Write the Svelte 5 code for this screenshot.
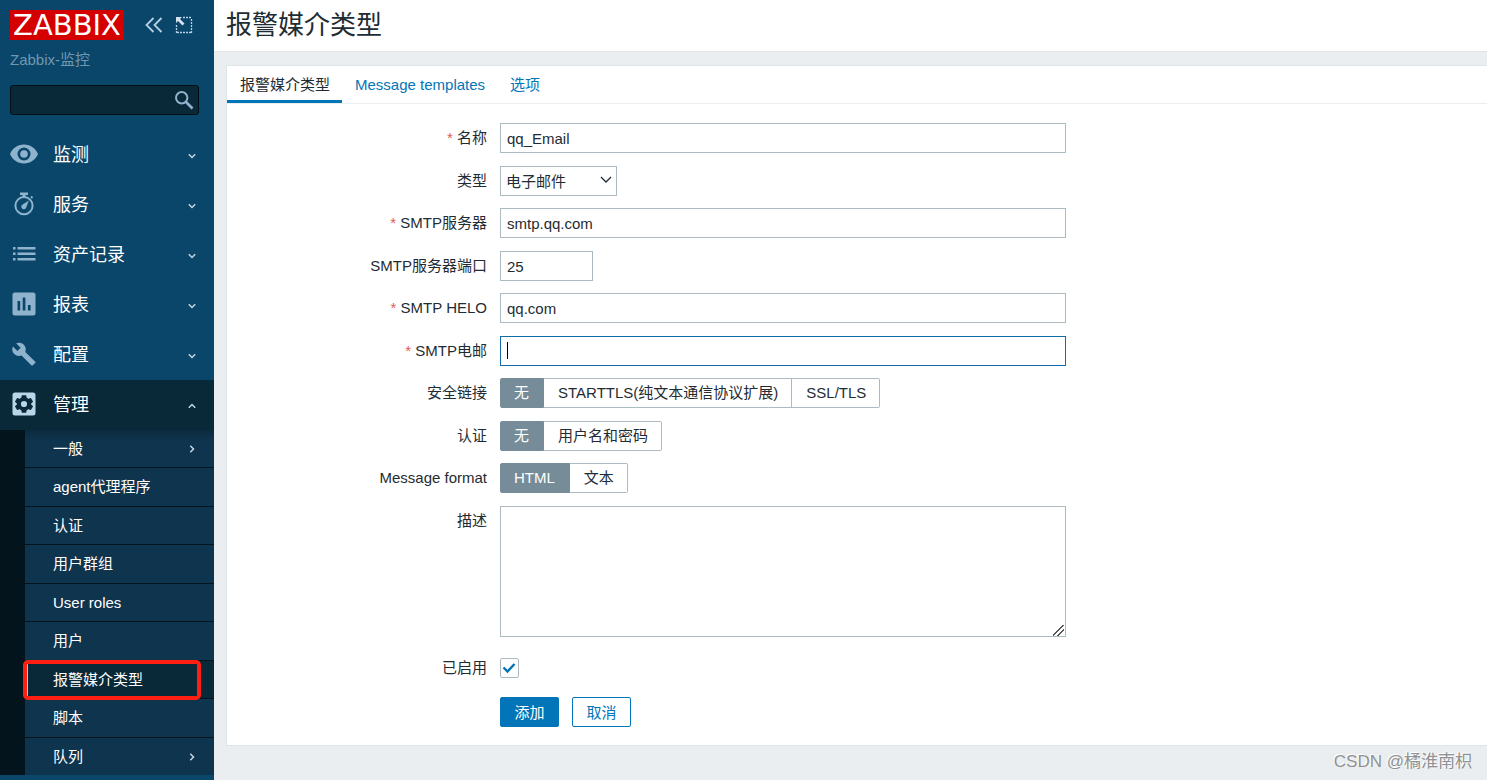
<script>
	const menu = [
		{ id: 'monitoring', label: '监测' },
		{ id: 'services', label: '服务' },
		{ id: 'inventory', label: '资产记录' },
		{ id: 'reports', label: '报表' },
		{ id: 'configuration', label: '配置' },
		{ id: 'administration', label: '管理' }
	];

	const submenu = [
		{ label: '一般', nested: true },
		{ label: 'agent代理程序' },
		{ label: '认证' },
		{ label: '用户群组' },
		{ label: 'User roles' },
		{ label: '用户' },
		{ label: '报警媒介类型' },
		{ label: '脚本' },
		{ label: '队列', nested: true }
	];

	const tabs = ['报警媒介类型', 'Message templates', '选项'];

	let activeMenu = $state('administration');
	let activePage = $state('报警媒介类型');
	let activeTab = $state(tabs[0]);

	let search = $state('');
	let form = $state({
		name: 'qq_Email',
		type: 'email',
		server: 'smtp.qq.com',
		port: '25',
		helo: 'qq.com',
		email: '',
		security: '无',
		auth: '无',
		format: 'HTML',
		description: '',
		enabled: true
	});
</script>

{#snippet chevron(dir)}
	<svg class="chevron {dir}" viewBox="0 0 8 8" width="8" height="8"><path d="M.8 2.3 4 5.5l3.2-3.2" /></svg>
{/snippet}

{#snippet textRow(key, label, required, size)}
	<div class="row">
		<label class="caption" class:required for={key}>{label}</label>
		<input id={key} class="text {size}" type="text" bind:value={form[key]} />
	</div>
{/snippet}

{#snippet radioRow(key, label, options)}
	<div class="row" role="radiogroup" aria-labelledby="{key}-label">
		<span class="caption" id="{key}-label">{label}</span>
		<div class="segments">
			{#each options as option, i}
				<div class="segment">
					<input type="radio" id="{key}-{i}" name={key} value={option} bind:group={form[key]} />
					<label for="{key}-{i}">{option}</label>
				</div>
			{/each}
		</div>
	</div>
{/snippet}

<div class="wrapper">
	<aside class="sidebar">
		<div class="brand">
			<a class="logo" href="#home">ZABBIX</a>
			<button class="tool" aria-label="Collapse sidebar">
				<svg viewBox="0 0 20 20" width="20" height="20" fill="none" stroke="#b5d0e4" stroke-width="1.8">
					<path d="M9.500 3 2.500 10l7 7M17.500 3l-7 7 7 7" />
				</svg>
			</button>
			<button class="tool" aria-label="Hide sidebar">
				<svg viewBox="0 0 20 20" width="20" height="20" fill="none" stroke="#b5d0e4">
					<path d="M9 2.500h9M17.500 4v14M2.500 10v8M3 17.500h14" stroke-width="1.300" stroke-dasharray="2 1" />
					<path d="M2 2h6L6 4l4.500 4.500-2 2L4 6 2 8z" fill="#d3e2ee" stroke="none" />
				</svg>
			</button>
		</div>
		<div class="server">Zabbix-监控</div>
		<form class="search">
			<input type="text" aria-label="Search" bind:value={search} />
			<button type="button" aria-label="Search">
				<svg viewBox="0 0 20 20" width="20" height="20" fill="none" stroke="#8fb3cc">
					<circle cx="7.700" cy="7.700" r="5.700" stroke-width="2" />
					<path d="m12 12 6.500 6.500" stroke-width="2.600" />
				</svg>
			</button>
		</form>

		<nav>
			{#each menu as item}
				<a
					class="menu-item"
					class:open={activeMenu === item.id}
					href="#{item.id}"
					onclick={() => (activeMenu = item.id)}
				>
					<svg class="icon" viewBox="0 0 28 28" width="28" height="28">
						{#if item.id === 'monitoring'}
							<path
								fill-rule="evenodd"
								d="M14 4.500C7.600 4.500 2.200 8.400 0 14c2.200 5.600 7.600 9.500 14 9.500S25.800 19.600 28 14C25.800 8.400 20.400 4.500 14 4.500zm0 16a6.500 6.500 0 1 1 0-13 6.500 6.500 0 0 1 0 13zm0-10.300a3.800 3.800 0 1 0 0 7.600 3.800 3.800 0 0 0 0-7.600z"
							/>
						{:else if item.id === 'services'}
							<circle cx="14" cy="15.700" r="8.600" fill="none" class="line" />
							<path d="M10 2.500h8v2.500h-2.400v2.500h-3.200V5H10zM20.300 7.200l1.400-1.400 1.500 1.500-1.400 1.400zM18.800 10.500l-2.300 6.300a2.600 2.600 0 1 1-3.400-2.600z" />
						{:else if item.id === 'inventory'}
							<path d="M3 7h2.500v2.500H3zM3 12.500h2.500V15H3zM3 18h2.500v2.500H3zM7.500 7H25.500v2.500H7.500zM7.500 12.500H25.500V15H7.500zM7.500 18H25.500v2.500H7.500z" />
						{:else if item.id === 'reports'}
							<path
								fill-rule="evenodd"
								d="M5 2.500h18q2.500 0 2.500 2.500v18q0 2.500-2.500 2.500H5Q2.500 25.500 2.500 23V5q0-2.500 2.500-2.500zM7.500 11v9.500h2.700V11zm5.200-3.500v13h2.700v-13zm5.200 7.500v5.500h2.700V15z"
							/>
						{:else if item.id === 'configuration'}
							<path d="m25 21.500-9.700-9.600c1-2.500.4-5.300-1.500-7.200-2.100-2.100-5.200-2.500-7.700-1.400l4.500 4.400-3.200 3.200L2.900 6.500C1.700 9 2.200 12.100 4.300 14.100c2 2 4.800 2.500 7.200 1.500l9.800 9.700c.4.400 1 .4 1.500 0l2.300-2.300c.5-.4.5-1.100-.1-1.500z" />
						{:else}
							<path
								fill-rule="evenodd"
								d="M5 2.500h18q2.500 0 2.500 2.500v18q0 2.500-2.500 2.500H5Q2.500 25.500 2.500 23V5q0-2.500 2.500-2.500zm6.800 2.700-.5 2.600-1.700 1-2.500-.9-2.200 3.800 2 1.700v1.200l-2 1.700 2.200 3.800 2.500-.9 1.700 1 .5 2.600h4.400l.5-2.600 1.700-1 2.500.9 2.200-3.800-2-1.700v-1.200l2-1.700-2.200-3.800-2.500.9-1.700-1-.5-2.600zM14 10.900a3.100 3.100 0 1 1 0 6.200 3.100 3.100 0 0 1 0-6.200z"
							/>
						{/if}
					</svg>
					<span>{item.label}</span>
					{@render chevron(activeMenu === item.id ? 'up' : 'down')}
				</a>
			{/each}
			<ul class="submenu">
				{#each submenu as page}
					<li>
						<a
							class:active={activePage === page.label}
							href="#{page.label}"
							onclick={() => (activePage = page.label)}
						>
							<span>{page.label}</span>
							{#if page.nested}{@render chevron('right')}{/if}
						</a>
					</li>
				{/each}
			</ul>
		</nav>
	</aside>

	<main>
		<header>
			<h1>报警媒介类型</h1>
		</header>

		<section class="panel">
			<div class="tabs">
				{#each tabs as tab}
					<a class:selected={activeTab === tab} href="#{tab}" onclick={() => (activeTab = tab)}>{tab}</a>
				{/each}
			</div>

			<form class="fields">
				{@render textRow('name', '名称', true, 'wide')}
				<div class="row">
					<label class="caption" for="type">类型</label>
					<div class="select">
						<select id="type" bind:value={form.type}>
							<option value="email">电子邮件</option>
							<option value="sms">短信</option>
							<option value="script">脚本</option>
						</select>
						<svg viewBox="0 0 12 8" width="12" height="8"><path d="m1 1 5 5 5-5" /></svg>
					</div>
				</div>
				{@render textRow('server', 'SMTP服务器', true, 'wide')}
				{@render textRow('port', 'SMTP服务器端口', false, 'short')}
				{@render textRow('helo', 'SMTP HELO', true, 'wide')}
				<div class="row">
					<label class="caption required" for="email">SMTP电邮</label>
					<div class="current">
						<input id="email" class="text" type="text" bind:value={form.email} />
						{#if !form.email}<i class="caret"></i>{/if}
					</div>
				</div>
				{@render radioRow('security', '安全链接', ['无', 'STARTTLS(纯文本通信协议扩展)', 'SSL/TLS'])}
				{@render radioRow('auth', '认证', ['无', '用户名和密码'])}
				{@render radioRow('format', 'Message format', ['HTML', '文本'])}
				<div class="row">
					<label class="caption" for="description">描述</label>
					<textarea id="description" bind:value={form.description}></textarea>
				</div>
				<div class="row enabled">
					<label class="caption" for="enabled">已启用</label>
					<div class="checkbox">
						<input id="enabled" type="checkbox" bind:checked={form.enabled} />
						{#if form.enabled}
							<svg viewBox="0 0 14 12" width="14" height="12"><path d="m1.500 5.500 4 4 7-7.500" /></svg>
						{/if}
					</div>
				</div>
				<div class="actions">
					<button type="button" class="primary">添加</button>
					<button type="button">取消</button>
				</div>
			</form>
		</section>
		<div class="watermark">CSDN @橘淮南枳</div>
	</main>
</div>

<style>
	:global(body) {
		background: #ebeef0;
	}

	.wrapper,
	.wrapper * {
		box-sizing: border-box;
	}

	.wrapper {
		display: flex;
		min-height: 100vh;
		color: #1f2c33;
		font-family: 'Liberation Sans', Arial, 'Noto Sans CJK SC', sans-serif;
		font-size: 15px;
		line-height: 20px;
	}

	a {
		text-decoration: none;
	}

	button,
	input,
	select,
	textarea {
		font: inherit;
		color: inherit;
		margin: 0;
	}

	button {
		cursor: pointer;
	}

	.sidebar {
		flex: none;
		width: 214px;
		background: #0a466a;
	}

	.brand {
		display: flex;
		align-items: center;
		gap: 10px;
		padding: 10px 10px 0;
	}

	.logo {
		width: 114px;
		height: 30px;
		margin-right: 10px;
		background: #d40000;
		color: #fff;
		font-family: 'DejaVu Sans', sans-serif;
		font-size: 29px;
		line-height: 30px;
		text-align: center;
	}

	.tool {
		display: flex;
		padding: 0;
		border: 0;
		background: none;
	}

	.server {
		padding: 10px 10px 0;
		color: #7297af;
	}

	.search {
		display: flex;
		height: 30px;
		margin: 15px 15px 15px 10px;
		border: 1px solid #020e14;
		border-radius: 3px;
		background: #092838;
	}

	.search input {
		flex: 1;
		min-width: 0;
		border: 0;
		outline: 0;
		background: none;
		color: #fff;
	}

	.search button {
		display: flex;
		align-items: center;
		padding: 0 4px;
		border: 0;
		background: none;
	}

	.menu-item {
		display: flex;
		align-items: center;
		height: 50px;
		padding: 0 18px 2px 10px;
		color: #fff;
		font-size: 18px;
	}

	.menu-item span {
		flex: 1;
		padding: 2px 0 0 15px;
	}

	.icon {
		fill: #8fb3cc;
	}

	.icon .line {
		stroke: #8fb3cc;
		stroke-width: 2;
	}

	.menu-item.open {
		background: #092838;
	}

	.open .icon {
		fill: #b9d5e9;
	}

	.chevron {
		flex: none;
		fill: none;
		stroke: #c3d6e3;
		stroke-width: 1.5;
	}

	.menu-item .chevron {
		margin-top: 4px;
	}

	.up {
		transform: rotate(180deg);
	}

	.right {
		transform: rotate(-90deg);
	}

	.submenu {
		margin: 0;
		padding: 0 0 0 25px;
		list-style: none;
		background:
			linear-gradient(rgba(3, 20, 29, 0.3), transparent 10px),
			linear-gradient(90deg, #03141d 25px, #0f344d 25px);
	}

	.submenu li {
		height: 38px;
		border-bottom: 1px solid #03141d;
	}

	.submenu li:nth-child(even) {
		height: 39px;
	}

	.submenu li:last-child {
		height: 37px;
		border: 0;
	}

	.submenu a {
		display: flex;
		align-items: center;
		justify-content: space-between;
		height: 100%;
		padding: 0 18px 0 28px;
		color: #fff;
	}

	/* red frame round the current page overlaps the neighbouring rows */
	.submenu a.active {
		position: relative;
		border-left: 3px solid #b9d5e9;
		padding-left: 25px;
		background: #092838;
	}

	.submenu a.active::after {
		content: '';
		position: absolute;
		inset: -1px 13px -2px -5px;
		border: 4px solid #fc1f12;
		border-radius: 5px;
	}

	main {
		position: relative;
		flex: 1;
		min-width: 0;
	}

	header {
		padding: 1px 12px 0;
		border-bottom: 1px solid #dfe4e7;
		background: #fff;
	}

	h1 {
		margin: 0;
		padding-bottom: 2px;
		font-size: 26px;
		font-weight: normal;
		line-height: 48px;
	}

	.panel {
		margin: 13px 0 0 12px;
		border: 1px solid #dfe4e7;
		border-right: 0;
		background: #fff;
	}

	.tabs {
		display: flex;
		height: 38px;
		border-bottom: 1px solid #ebeef0;
	}

	.tabs a {
		height: 37px;
		padding: 0 12px 0 13px;
		color: #0275b8;
		line-height: 37px;
	}

	.tabs a.selected {
		border-bottom: 3px solid #0275b8;
		color: #1f2c33;
	}

	.fields {
		padding: 19px 0 18px;
	}

	.row {
		display: flex;
		margin-bottom: 12px;
	}

	.row:nth-child(odd) {
		margin-bottom: 13px;
	}

	.caption {
		flex: none;
		width: 273px;
		padding-right: 13px;
		line-height: 30px;
		text-align: right;
	}

	.required::before {
		content: '* ';
		color: #e45959;
	}

	.text,
	select,
	textarea {
		border: 1px solid #acbbc2;
		border-radius: 0;
		outline: 0;
		background: #fff;
	}

	.text {
		width: 100%;
		height: 30px;
		padding: 1px 6px 0;
	}

	.wide,
	.current,
	textarea {
		width: 566px;
	}

	.short {
		width: 93px;
	}

	.current {
		position: relative;
	}

	.current .text {
		border-color: #0f6ca8;
	}

	.caret {
		position: absolute;
		top: 6px;
		left: 7px;
		width: 1px;
		height: 17px;
		background: #000;
	}

	.select {
		position: relative;
	}

	select {
		width: 117px;
		height: 30px;
		padding: 1px 5px 0;
		appearance: none;
	}

	.select svg {
		position: absolute;
		top: 10px;
		right: 5px;
		fill: none;
		stroke: #1f2c33;
		stroke-width: 1.3;
		pointer-events: none;
	}

	.segments {
		display: flex;
	}

	.segment {
		position: relative;
	}

	.segment input {
		position: absolute;
		inset: 0;
		opacity: 0;
	}

	.segment label {
		display: block;
		height: 30px;
		padding: 0 13px 0 14px;
		border: 1px solid #acbbc2;
		border-left-width: 0;
		line-height: 28px;
	}

	.segment:first-child label {
		padding: 0 14px 0 13px;
		border-left-width: 1px;
		border-radius: 2px 0 0 2px;
	}

	.segment:last-child label {
		border-radius: 0 2px 2px 0;
	}

	.segment input:checked + label {
		border-color: #768d99;
		background: #768d99;
		color: #fff;
	}

	textarea {
		display: block;
		height: 131px;
		padding: 4px 6px;
		resize: both;
	}

	textarea::-webkit-resizer {
		background: linear-gradient(
				135deg,
				transparent 42%,
				#555 42% 51%,
				transparent 51% 65%,
				#555 65% 74%,
				transparent 74%
			)
			3px 4px / 11px 11px no-repeat;
	}

	.enabled {
		align-items: center;
		margin-top: 16px;
	}

	.checkbox {
		position: relative;
		height: 20px;
	}

	.checkbox input {
		display: block;
		width: 19px;
		height: 20px;
		border: 1px solid #acbbc2;
		border-radius: 2px;
		appearance: none;
	}

	.checkbox svg {
		position: absolute;
		top: 4px;
		left: 2px;
		fill: none;
		stroke: #0275b8;
		stroke-width: 2.4;
		pointer-events: none;
	}

	.actions {
		display: flex;
		gap: 13px;
		padding: 1px 0 0 273px;
	}

	.actions button {
		width: 59px;
		height: 30px;
		padding: 1px 0 0;
		border: 1px solid #0275b8;
		border-radius: 2px;
		background: #fff;
		color: #0275b8;
	}

	.actions .primary {
		background: #0275b8;
		color: #fff;
	}

	.watermark {
		position: absolute;
		right: 15px;
		bottom: 6px;
		color: #8f9193;
		font-size: 17px;
		line-height: 24px;
		text-shadow: -1px -1px 0 #fff;
	}
</style>
